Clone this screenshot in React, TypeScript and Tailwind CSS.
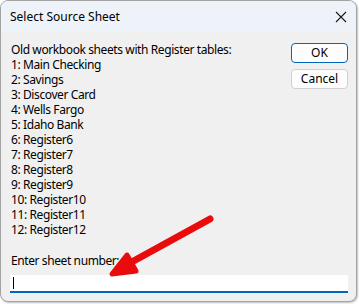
import React from "react";

const sheets = [
  "1: Main Checking",
  "2: Savings",
  "3: Discover Card",
  "4: Wells Fargo",
  "5: Idaho Bank",
  "6: Register6",
  "7: Register7",
  "8: Register8",
  "9: Register9",
  "10: Register10",
  "11: Register11",
  "12: Register12",
];

export default function App() {
  return (
    <div className="w-[359px] h-[304px] bg-white" style={{ fontFamily: '"Segoe UI", "Noto Sans", sans-serif' }}>
      <div className="relative w-[357px] h-[302px] border border-[#a3a3a3] rounded-[8px] overflow-hidden bg-[#f0f0f0] shadow-[1px_1px_2px_rgba(0,0,0,0.25)] flex flex-col">
        <div className="h-[31px] bg-[#eef2f9] flex items-center justify-between pl-[9px] pr-[9px] shrink-0">
          <span className="text-[12px] text-black leading-none">Select Source Sheet</span>
          <svg width="12" height="12" viewBox="0 0 12 12">
            <path d="M1 1 L11 11 M11 1 L1 11" stroke="#1a1a1a" strokeWidth="1.1" />
          </svg>
        </div>
        <div className="flex flex-col pl-[10px] pr-[8px] pt-[10px]">
          <div className="flex justify-between">
            <div className="flex flex-col text-[12px] leading-[15px] tracking-[-0.4px] text-black">
              <span>Old workbook sheets with Register tables:</span>
              {sheets.map((s) => (
                <span key={s}>{s}</span>
              ))}
            </div>
            <div className="flex flex-col gap-[6px] mt-[1px]">
              <button className="w-[57px] h-[20px] rounded-[4px] border border-[#0067c0] bg-[#fdfdfd] text-[12px] text-black leading-none flex items-center justify-center">
                OK
              </button>
              <button className="w-[57px] h-[20px] rounded-[4px] border border-[#d0d0d0] bg-[#fdfdfd] text-[12px] text-black leading-none flex items-center justify-center">
                Cancel
              </button>
            </div>
          </div>
          <span className="mt-[16px] text-[12px] leading-[15px] tracking-[-0.4px] text-black">Enter sheet number:</span>
          <div className="mt-[7px] -ml-[1px] w-[338px] h-[18px] bg-white border-b-2 border-[#0067c0] flex items-center pl-[3px]">
            <div className="w-[1px] h-[12px] bg-black" />
          </div>
        </div>
        <svg className="absolute left-0 top-0 pointer-events-none" width="357" height="302" viewBox="0 0 357 302">
          <path d="M209 218 L118 268" stroke="#ea0c0c" strokeWidth="7" strokeLinecap="round" />
          <path d="M126 254 L111 273 L135 270 Z" stroke="#ea0c0c" strokeWidth="5" strokeLinecap="round" strokeLinejoin="round" fill="#ea0c0c" />
        </svg>
      </div>
    </div>
  );
}
